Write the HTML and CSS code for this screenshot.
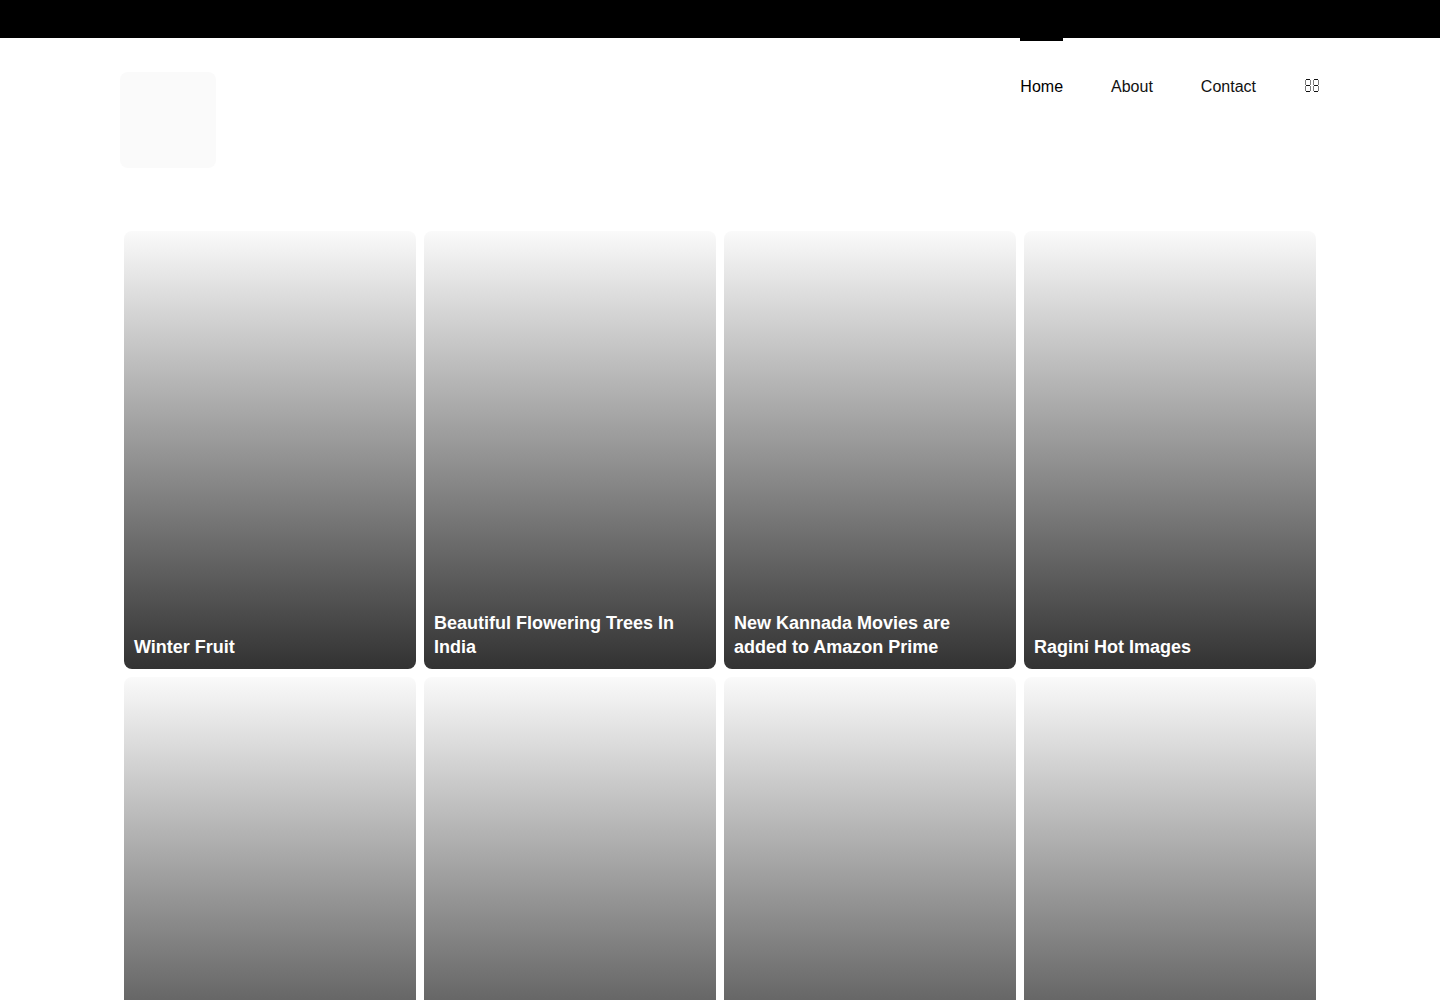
FILE: index.html
```html
<!DOCTYPE html>
<html lang="en">
<head>
<meta charset="utf-8">
<meta name="viewport" content="width=device-width, initial-scale=1">
<title>Home</title>
<link rel="stylesheet" href="styles.css">
</head>
<body>
<div class="topbar"></div>
<header class="header">
  <a class="logo" href="#"></a>
  <nav class="nav">
    <a class="nav-link nav-link-active" href="#">Home</a>
    <a class="nav-link" href="#">About</a>
    <a class="nav-link" href="#">Contact</a>
    <button class="nav-button" type="button">
      <svg class="nav-icon" width="16" height="16" viewBox="0 0 16 16" fill="none" stroke="currentColor" stroke-width="1">
        <path d="M2 1.5h4M2 7.5h4M2 13.5h4M10 1.5h4M10 7.5h4M10 13.5h4"/>
        <path stroke-opacity=".55" d="M1.5 2v5M1.5 8v5M6.5 2v5M6.5 8v5M9.5 2v5M9.5 8v5M14.5 2v5M14.5 8v5"/>
      </svg>
    </button>
  </nav>
</header>
<main class="gallery">
  <a class="card" href="#"><h2 class="card-title">Winter Fruit</h2></a>
  <a class="card" href="#"><h2 class="card-title">Beautiful Flowering Trees In India</h2></a>
  <a class="card" href="#"><h2 class="card-title">New Kannada Movies are added to Amazon Prime</h2></a>
  <a class="card" href="#"><h2 class="card-title">Ragini Hot Images</h2></a>
  <a class="card" href="#"></a>
  <a class="card" href="#"></a>
  <a class="card" href="#"></a>
  <a class="card" href="#"></a>
</main>
</body>
</html>
```
FILE: styles.css
```css
* {
  box-sizing: border-box;
}

body {
  margin: 0;
  background: #fff;
  color: #111;
  font: 16px/24px "Liberation Sans", Arial, sans-serif;
}

.topbar {
  height: 38px;
  background: #000;
}

.header {
  display: flex;
  justify-content: space-between;
  align-items: flex-start;
  max-width: 1200px;
  margin: 0 auto;
}

.logo {
  width: 96px;
  height: 96px;
  margin: 34px 0 63px;
  border-radius: 8px;
  background: #fafafa;
}

.nav {
  display: flex;
  align-items: flex-start;
  gap: 48px;
}

.nav-link {
  padding: 34px 0 32px;
  border-top: 3px solid transparent;
  color: inherit;
  text-decoration: none;
}

.nav-link-active {
  border-color: #000;
  color: #000;
}

.nav-button {
  display: flex;
  padding: 40px 0 32px;
  border: 0;
  background: none;
  color: #111;
}

.gallery {
  display: grid;
  grid-template-columns: repeat(4, 1fr);
  gap: 8px;
  max-width: 1200px;
  margin: 0 auto;
  padding: 0 4px;
}

.card {
  display: flex;
  align-items: flex-end;
  aspect-ratio: 2 / 3;
  padding: 10px;
  border-radius: 8px;
  background: linear-gradient(#fafafa, #323232);
  color: #fff;
  text-decoration: none;
}

.card-title {
  margin: 0;
  font-size: 18px;
  line-height: 24px;
}
```
